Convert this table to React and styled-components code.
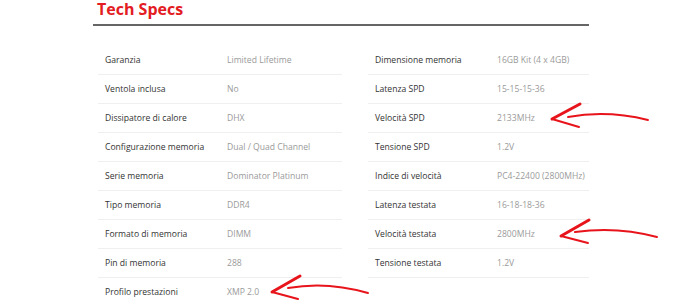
import React from "react";
import styled, { createGlobalStyle } from "styled-components";

const GlobalStyle = createGlobalStyle`
  html, body {
    margin: 0;
    padding: 0;
    background: #fff;
  }
  body {
    font-family: "Open Sans", "Liberation Sans", sans-serif;
    overflow: hidden;
  }
`;

const leftSpecs = [
  ["Garanzia", "Limited Lifetime"],
  ["Ventola inclusa", "No"],
  ["Dissipatore di calore", "DHX"],
  ["Configurazione memoria", "Dual / Quad Channel"],
  ["Serie memoria", "Dominator Platinum"],
  ["Tipo memoria", "DDR4"],
  ["Formato di memoria", "DIMM"],
  ["Pin di memoria", "288"],
  ["Profilo prestazioni", "XMP 2.0"],
];

const rightSpecs = [
  ["Dimensione memoria", "16GB Kit (4 x 4GB)"],
  ["Latenza SPD", "15-15-15-36"],
  ["Velocità SPD", "2133MHz"],
  ["Tensione SPD", "1.2V"],
  ["Indice di velocità", "PC4-22400 (2800MHz)"],
  ["Latenza testata", "16-18-18-36"],
  ["Velocità testata", "2800MHz"],
  ["Tensione testata", "1.2V"],
];

// hand drawn arrows: tip, upper barb, lower barb, shaft
const arrows = [
  { tip: [552, 119], up: [580, 104], down: [579, 127], shaft: [[568, 117], [607, 112], [648, 120]] },
  { tip: [561, 236], up: [589, 220], down: [588, 243], shaft: [[575, 232], [617, 228], [657, 237]] },
  { tip: [272, 292], up: [300, 276], down: [298, 299], shaft: [[288, 288], [327, 283], [368, 293]] },
];

function App() {
  return (
    <>
      <GlobalStyle />
      <Page>
        <Section>
          <Title>Tech Specs</Title>
          <Columns>
            <SpecTable>
              {leftSpecs.map(([label, value]) => (
                <Row key={label}>
                  <Label>{label}</Label>
                  <Value>{value}</Value>
                </Row>
              ))}
            </SpecTable>
            <SpecTable>
              {rightSpecs.map(([label, value]) => (
                <Row key={label}>
                  <Label>{label}</Label>
                  <Value>{value}</Value>
                </Row>
              ))}
            </SpecTable>
          </Columns>
        </Section>
        <Marks viewBox="0 0 690 300">
          {arrows.map((a, i) => (
            <g key={i} fill="none" stroke="#e8141b" strokeLinecap="round" strokeLinejoin="round">
              <path d={`M${a.up[0]} ${a.up[1]} L${a.tip[0]} ${a.tip[1]}`} strokeWidth="3" />
              <path d={`M${a.tip[0]} ${a.tip[1]} L${a.down[0]} ${a.down[1]}`} strokeWidth="2" />
              <path
                d={`M${a.shaft[0][0]} ${a.shaft[0][1]} Q${a.shaft[1][0]} ${a.shaft[1][1] - 2} ${a.shaft[2][0]} ${a.shaft[2][1]}`}
                strokeWidth="2"
              />
            </g>
          ))}
        </Marks>
      </Page>
    </>
  );
}

const Page = styled.div`
  position: relative;
  width: 690px;
  height: 300px;
  overflow: hidden;
`;

const Section = styled.section`
  width: 496px;
  margin-left: 93px;
`;

const Title = styled.h2`
  margin: 0;
  padding-left: 4px;
  height: 24px;
  line-height: 19px;
  font-size: 16px;
  font-weight: 700;
  color: #e31b23;
  border-bottom: 2px solid #666;
`;

const Columns = styled.div`
  display: grid;
  grid-template-columns: 244px 221px;
  column-gap: 26px;
  margin: 20px 0 0 5px;
  align-items: start;
`;

const SpecTable = styled.div`
  display: flex;
  flex-direction: column;
`;

const Row = styled.div`
  display: grid;
  grid-template-columns: 122px 1fr;
  align-items: center;
  height: 28px;
  padding-left: 7px;
  border-bottom: 1px solid #efefef;
  font-size: 8.6px;
  white-space: nowrap;
`;

const Label = styled.span`
  color: #333;
`;

const Value = styled.span`
  color: #9a9a9a;
`;

const Marks = styled.svg`
  position: absolute;
  inset: 0;
  width: 690px;
  height: 300px;
  pointer-events: none;
`;

export default App;
